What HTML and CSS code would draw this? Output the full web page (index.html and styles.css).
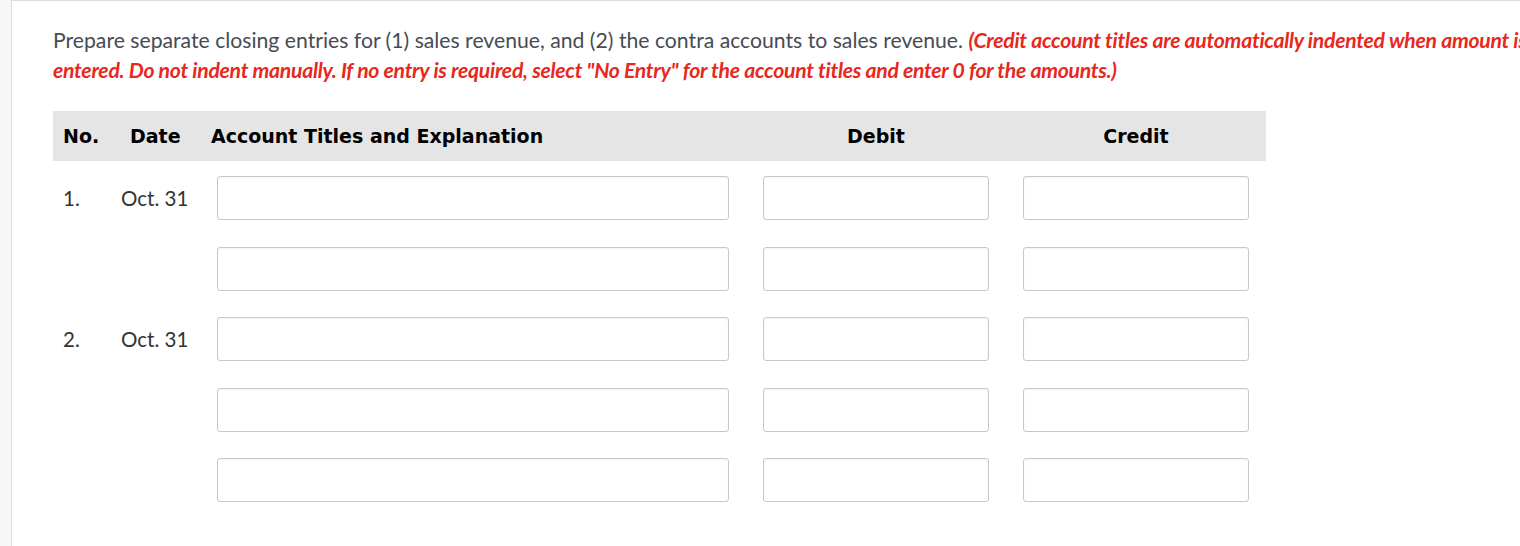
FILE: index.html
```html
<!DOCTYPE html>
<html lang="en">
<head>
    <meta charset="UTF-8">
    <title>Closing Entries</title>
    <link rel="stylesheet" href="styles.css">
</head>
<body>
    <div class="panel">
        <p class="instructions">
            Prepare separate closing entries for (1) sales revenue, and (2) the contra accounts to sales revenue.
            <em class="note">(Credit account titles are automatically indented when amount is entered. Do not indent manually. If no entry is required, select "No Entry" for the account titles and enter 0 for the amounts.)</em>
        </p>

        <div class="journal">
            <!-- Header -->
            <div class="journal-head">
                <div class="head-no">No.</div>
                <div class="head-date">Date</div>
                <div class="head-acct">Account Titles and Explanation</div>
                <div class="head-amt">Debit</div>
                <div class="head-amt">Credit</div>
            </div>

            <!-- Entry 1 -->
            <div class="journal-row">
                <div class="cell-no">1.</div>
                <div class="cell-date">Oct. 31</div>
                <div class="cell-acct"><input type="text"></div>
                <div class="cell-amt"><input type="text"></div>
                <div class="cell-amt"><input type="text"></div>
            </div>
            <div class="journal-row">
                <div class="cell-no"></div>
                <div class="cell-date"></div>
                <div class="cell-acct"><input type="text"></div>
                <div class="cell-amt"><input type="text"></div>
                <div class="cell-amt"><input type="text"></div>
            </div>

            <!-- Entry 2 -->
            <div class="journal-row">
                <div class="cell-no">2.</div>
                <div class="cell-date">Oct. 31</div>
                <div class="cell-acct"><input type="text"></div>
                <div class="cell-amt"><input type="text"></div>
                <div class="cell-amt"><input type="text"></div>
            </div>
            <div class="journal-row">
                <div class="cell-no"></div>
                <div class="cell-date"></div>
                <div class="cell-acct"><input type="text"></div>
                <div class="cell-amt"><input type="text"></div>
                <div class="cell-amt"><input type="text"></div>
            </div>
            <div class="journal-row">
                <div class="cell-no"></div>
                <div class="cell-date"></div>
                <div class="cell-acct"><input type="text"></div>
                <div class="cell-amt"><input type="text"></div>
                <div class="cell-amt"><input type="text"></div>
            </div>
        </div>
    </div>
</body>
</html>
```

FILE: styles.css
```css
* {
    box-sizing: border-box;
}

body {
    margin: 0;
    padding: 0 0 0 11px;
    background-color: #f7f7f7;
    font-family: Lato, "Open Sans", sans-serif;
    overflow: hidden;
    height: 546px;
}

.panel {
    width: 1560px;
    min-height: 560px;
    background-color: #fff;
    border-top: 1px solid #dedede;
    border-left: 1px solid #dedede;
    padding: 24px 0 0 41px;
}

.instructions {
    margin: 0;
    font-size: 21.2px;
    line-height: 30px;
    color: #464c53;
    width: 1490px;
}

.note {
    color: #e8281c;
    font-weight: bold;
    letter-spacing: -0.27px;
}

.journal {
    width: 1213px;
    margin-top: 26px;
}

.journal-head,
.journal-row {
    display: grid;
    grid-template-columns: 67px 87px 539px 260px 260px;
    align-items: center;
}

.journal-head {
    height: 50px;
    background-color: #e5e5e5;
    font-family: "DejaVu Sans", Verdana, sans-serif;
    font-size: 19px;
    font-weight: bold;
    color: #000;
}

.head-no,
.head-date {
    padding-left: 10px;
}

.head-acct {
    padding-left: 4px;
}

.head-amt {
    text-align: center;
}

.journal-head + .journal-row {
    margin-top: 2px;
}

.journal-row {
    height: 70.5px;
    font-size: 20.5px;
    color: #333;
}

.cell-no {
    padding-left: 10px;
}

.cell-date {
    padding-left: 1px;
}

.cell-acct {
    padding-left: 10px;
}

.cell-amt {
    display: flex;
    justify-content: center;
}

input {
    height: 44px;
    border: 1px solid #c8c8c8;
    border-radius: 3px;
    background-color: #fff;
    box-shadow: inset 0 1px 2px rgba(0, 0, 0, 0.05);
    font-family: inherit;
    font-size: 18px;
    padding: 0 8px;
}

.cell-acct input {
    width: 512px;
}

.cell-amt input {
    width: 226px;
}
```
